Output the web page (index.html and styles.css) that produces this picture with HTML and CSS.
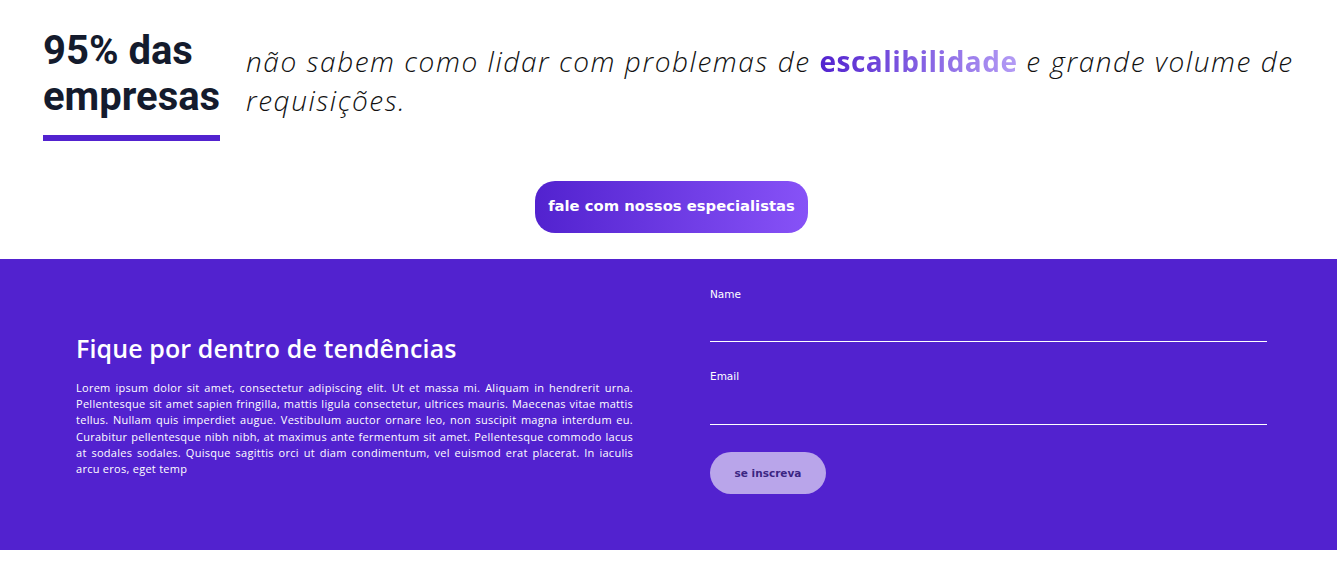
FILE: index.html
```html
<!DOCTYPE html>
<html lang="pt">
<head>
<meta charset="utf-8">
<link rel="stylesheet" href="styles.css">
</head>
<body>
<section class="stat">
  <div class="stat-figure">
    <h2 class="stat-title">95% das empresas</h2>
    <div class="stat-bar"></div>
  </div>
  <p class="stat-text">não sabem como lidar com problemas de <strong class="grad">escalibilidade</strong> e grande volume de requisições.</p>
</section>
<div class="cta-row">
  <a class="cta" href="#">fale com nossos especialistas</a>
</div>
<section class="news">
  <div class="news-inner">
    <div class="news-left">
      <h3 class="news-title">Fique por dentro de tendências</h3>
      <p class="news-text">Lorem ipsum dolor sit amet, consectetur adipiscing elit. Ut et massa mi. Aliquam in hendrerit urna. Pellentesque sit amet sapien fringilla, mattis ligula consectetur, ultrices mauris. Maecenas vitae mattis tellus. Nullam quis imperdiet augue. Vestibulum auctor ornare leo, non suscipit magna interdum eu. Curabitur pellentesque nibh nibh, at maximus ante fermentum sit amet. Pellentesque commodo lacus at sodales sodales. Quisque sagittis orci ut diam condimentum, vel euismod erat placerat. In iaculis arcu eros, eget temp</p>
    </div>
    <form class="news-form">
      <label class="field">
        <span class="field-label">Name</span>
        <span class="field-input"></span>
      </label>
      <label class="field">
        <span class="field-label">Email</span>
        <span class="field-input"></span>
      </label>
      <button type="button" class="subscribe">se inscreva</button>
    </form>
  </div>
</section>
</body>
</html>
```
FILE: styles.css
```css
* { box-sizing: border-box; }
html, body { margin: 0; padding: 0; background: #fff; }
body { font-family: "Open Sans", "DejaVu Sans", sans-serif; }

.stat {
  display: flex;
  align-items: flex-start;
  gap: 26px;
  padding: 28px 43px 0 43px;
}
.stat-figure { width: 177px; flex: none; }
.stat-title {
  margin: 0;
  font-family: Roboto, sans-serif;
  font-weight: 700;
  font-size: 40px;
  line-height: 46px;
  color: #141b2d;
}
.stat-bar {
  height: 6px;
  background: #5222cf;
  margin-top: 15px;
}
.stat-text {
  margin: 14px 0 0 0;
  font-family: "Open Sans", sans-serif;
  font-style: italic;
  font-weight: 300;
  font-size: 28px;
  line-height: 39px;
  letter-spacing: 1.55px;
  color: #111;
}
.grad {
  font-style: normal;
  font-weight: 700;
  letter-spacing: 0.5px;
  background: linear-gradient(90deg, #5222cf, #b49cf5);
  -webkit-background-clip: text;
  background-clip: text;
  color: transparent;
}

.cta-row {
  display: flex;
  justify-content: center;
  padding: 40px 0 26px 6px;
}
.cta {
  display: flex;
  align-items: center;
  justify-content: center;
  width: 273px;
  height: 52px;
  padding-bottom: 3px;
  border-radius: 20px;
  background: linear-gradient(90deg, #5222cf, #8752f7);
  color: #fff;
  text-decoration: none;
  font-family: "DejaVu Sans", sans-serif;
  font-weight: 700;
  font-size: 14.8px;
}

.news {
  background: #5222cf;
  height: 291px;
  color: #fff;
}
.news-inner {
  display: flex;
  gap: 77px;
  padding: 0 70px 0 76px;
  height: 100%;
}
.news-left {
  flex: 1;
  padding-top: 73px;
}
.news-title {
  margin: 0 0 16px 0;
  font-family: "Open Sans", sans-serif;
  font-weight: 600;
  font-size: 25px;
  line-height: 32px;
  letter-spacing: 0.1px;
}
.news-text {
  margin: 0;
  font-family: "Open Sans", sans-serif;
  font-weight: 500;
  font-size: 11px;
  line-height: 16.2px;
  letter-spacing: 0.27px;
  text-align: justify;
}
.news-form {
  flex: 1;
  padding-top: 28px;
  display: flex;
  flex-direction: column;
  align-items: flex-start;
}
.field {
  display: flex;
  flex-direction: column;
  width: 100%;
  margin-bottom: 27px;
}
.field-label {
  font-family: "DejaVu Sans", sans-serif;
  font-size: 10.5px;
  line-height: 14px;
}
.field-input {
  height: 41px;
  border-bottom: 1px solid #fff;
}
.field + .field .field-input { height: 42px; }
.subscribe {
  margin-top: 0;
  width: 116px;
  height: 42px;
  border: none;
  border-radius: 21px;
  background: #b9a5ea;
  color: #3b2583;
  font-family: "DejaVu Sans", sans-serif;
  font-weight: 700;
  font-size: 10.5px;
}
```
